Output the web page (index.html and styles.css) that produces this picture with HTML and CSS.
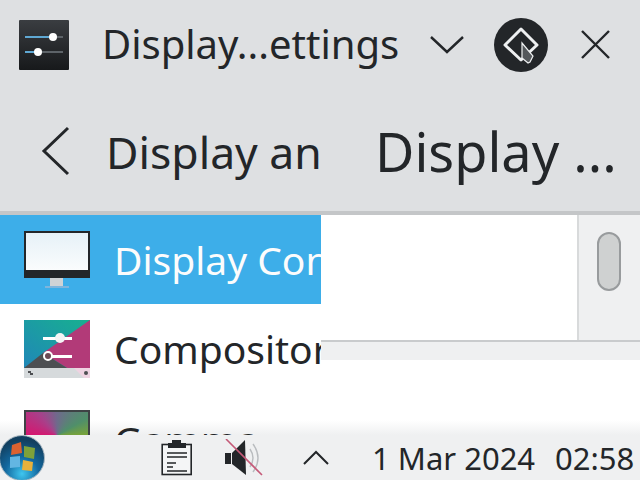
FILE: index.html
```html
<!DOCTYPE html>
<html lang="en">
<head>
	<meta charset="UTF-8">
	<title>Display Settings</title>
	<link rel="stylesheet" href="styles.css">
</head>
<body>
<div class="screen">
	<div class="titlebar">
		<svg class="app-icon" width="52" height="52" viewBox="0 0 52 52">
			<defs>
				<linearGradient id="appbg" x1="0" y1="0" x2="0" y2="1">
					<stop offset="0" stop-color="#3a3d41"/>
					<stop offset="1" stop-color="#17191b"/>
				</linearGradient>
			</defs>
			<rect x="1" y="1" width="50" height="50" rx="1" fill="url(#appbg)"/>
			<rect x="7" y="17" width="38" height="2" fill="#5d6368"/>
			<rect x="7" y="17" width="29" height="2" fill="#5fa8d3"/>
			<rect x="7" y="32" width="38" height="2" fill="#5d6368"/>
			<rect x="7" y="32" width="14" height="2" fill="#5fa8d3"/>
			<circle cx="35" cy="18" r="4" fill="#fff"/>
			<circle cx="20" cy="33" r="4" fill="#fff"/>
		</svg>
		<div class="title">Display...ettings</div>
		<svg class="chevron" width="36" height="24" viewBox="0 0 36 24">
			<path d="M2 4 L18 19 L34 4" fill="none" stroke="#232629" stroke-width="2.4"/>
		</svg>
		<svg class="pin-btn" width="56" height="56" viewBox="0 0 56 56">
			<circle cx="28" cy="28" r="27" fill="#232629"/>
			<path d="M28 12 L44 28 L28 43 L12 28 Z" fill="none" stroke="#eef0f1" stroke-width="3" stroke-linejoin="round"/>
			<path d="M29 26 L40 39 L37 45 L35 46 L29 41 Z" fill="#54585b" stroke="#eef0f1" stroke-width="1.2"/>
		</svg>
		<svg class="close" width="30" height="30" viewBox="0 0 30 30">
			<path d="M2 1 L29 28 M29 1 L2 28" fill="none" stroke="#232629" stroke-width="2.4"/>
		</svg>
	</div>
	<div class="toolbar">
		<svg class="back" width="30" height="50" viewBox="0 0 30 50">
			<path d="M27 2 L3 25 L27 48" fill="none" stroke="#232629" stroke-width="3"/>
		</svg>
		<div class="crumb">Display an</div>
		<div class="heading">Display ...</div>
	</div>
	<div class="main">
		<div class="list">
			<div class="row selected">
				<svg class="row-icon" width="66" height="58" viewBox="0 0 66 58">
					<defs>
						<linearGradient id="scr" x1="0" y1="0" x2="0" y2="1">
							<stop offset="0" stop-color="#e6f1f7"/>
							<stop offset="1" stop-color="#fafcfd"/>
						</linearGradient>
					</defs>
					<rect x="0" y="0" width="66" height="47" fill="#232629"/>
					<rect x="2" y="2" width="62" height="37" fill="url(#scr)"/>
					<rect x="26" y="47" width="13" height="8" fill="#cfd3d6"/>
					<rect x="21" y="55" width="24" height="2" fill="#7fb5dc"/>
				</svg>
				<span class="row-text">Display Configuration</span>
			</div>
			<div class="row">
				<svg class="row-icon" width="66" height="58" viewBox="0 0 66 58">
					<defs>
						<linearGradient id="teal" x1="0" y1="1" x2="1" y2="0">
							<stop offset="0" stop-color="#2087b8"/>
							<stop offset="1" stop-color="#17b08f"/>
						</linearGradient>
					</defs>
					<rect x="0" y="0" width="66" height="48" fill="url(#teal)"/>
					<path d="M66 0 L66 48 L43 48 L19 33 Z" fill="#b23a78"/>
					<path d="M0 48 L19 33 L43 48 Z" fill="#4d4f52"/>
					<rect x="0" y="48" width="66" height="10" fill="#d6dadc"/>
					<path d="M50 48 L66 48 L66 58 L60 58 Z" fill="#efd3e2"/>
					<rect x="19" y="17" width="29" height="3" fill="#fff"/>
					<circle cx="36" cy="18" r="5" fill="#f4f5f6"/>
					<rect x="24" y="35" width="24" height="3" fill="#fff"/>
					<circle cx="24" cy="36" r="4" fill="#6b4a55" stroke="#fff" stroke-width="2"/>
					<circle cx="62" cy="53" r="2" fill="#4d4f52"/>
					<rect x="4" y="51" width="3" height="2" fill="#4d4f52"/>
					<rect x="6" y="53" width="3" height="2" fill="#4d4f52"/>
				</svg>
				<span class="row-text">Compositor</span>
			</div>
			<div class="row row-gamma">
				<div class="gamma-icon"></div>
				<span class="row-text">Gamma</span>
			</div>
		</div>
		<div class="side">
			<div class="side-top">
				<div class="side-blank"></div>
				<div class="scrollbar"><div class="thumb"></div></div>
			</div>
			<div class="hscroll"></div>
		</div>
	</div>
	<div class="panel">
		<svg class="orb" width="50" height="50" viewBox="0 0 50 50">
			<defs>
				<radialGradient id="orbbg" cx="0.5" cy="0.85" r="0.75">
					<stop offset="0" stop-color="#3fc6ef"/>
					<stop offset="0.5" stop-color="#12689f"/>
					<stop offset="1" stop-color="#123f5f"/>
				</radialGradient>
			</defs>
			<circle cx="22" cy="25" r="22.5" fill="url(#orbbg)" stroke="#a9b8c2" stroke-width="1"/>
			<path d="M12 12 L21 9 L22 20 L11 22 Z" fill="#dc6230"/>
			<path d="M24 13 L35 15 L34 26 L24 24 Z" fill="#7ea13a"/>
			<path d="M10 24 L20 23 L20 34 L10 35 Z" fill="#63b6e2"/>
			<path d="M23 27 L33 29 L32 38 L22 37 Z" fill="#e8b13a"/>
		</svg>
		<svg class="clip" width="32" height="36" viewBox="0 0 32 36">
			<rect x="1.2" y="4.5" width="29" height="30" fill="#f4f5f6" stroke="#232629" stroke-width="1.6"/>
			<path d="M11 0 H20 V3 H25 V8 H7 V3 H11 Z" fill="#232629"/>
			<path d="M6 13 H26 M6 17 H26 M6 23 H15 M6 27 H12 M6 31 H26" stroke="#232629" stroke-width="1.6"/>
		</svg>
		<svg class="speaker" width="38" height="38" viewBox="0 0 38 38">
			<rect x="0" y="14" width="6" height="11" fill="#232629"/>
			<path d="M7 14 L20 1 L21 36 L7 25 Z" fill="#232629"/>
			<path d="M25 10 Q31 19 25 28 M28 5 Q38 19 28 33" fill="none" stroke="#b9bcbf" stroke-width="1.4"/>
			<path d="M1 0 L37 36" stroke="#c55a78" stroke-width="1.6"/>
		</svg>
		<svg class="tray-up" width="28" height="16" viewBox="0 0 28 16">
			<path d="M2 14 L14 2 L26 14" fill="none" stroke="#232629" stroke-width="2"/>
		</svg>
		<span class="clock-date">1 Mar 2024</span>
		<span class="clock-time">02:58</span>
	</div>
</div>
</body>
</html>
```

FILE: styles.css
```css
body {
	margin: 0;
	font-family: "Noto Sans", sans-serif;
	color: #232629;
}
.screen {
	width: 640px;
	height: 480px;
	display: flex;
	flex-direction: column;
	overflow: hidden;
	background: #fff;
}

/* window title */
.titlebar {
	height: 90px;
	display: flex;
	align-items: center;
	background: #dee0e2;
}
.app-icon {
	margin-left: 18px;
	flex: none;
}
.title {
	margin-left: 32px;
	width: 327px;
	padding-bottom: 3px;
	font-size: 40px;
	white-space: nowrap;
}
.pin-btn {
	margin-left: 28px;
}
.close {
	margin-left: 31px;
}

/* page header */
.toolbar {
	height: 121px;
	display: flex;
	align-items: center;
	background: #dee0e2;
	border-bottom: 4px solid #c4c6c8;
}
.back {
	margin-left: 41px;
	flex: none;
}
.crumb {
	margin-left: 35px;
	width: 269px;
	padding-top: 2px;
	font-size: 44.5px;
	white-space: nowrap;
	overflow: hidden;
}
.heading {
	font-size: 54px;
	white-space: nowrap;
}

/* content */
.main {
	flex: 1;
	display: flex;
	overflow: hidden;
	background: linear-gradient(#fff 205px, #eff0f1 220px);
}
.list {
	width: 321px;
	flex: none;
	overflow: hidden;
}
.row {
	height: 89px;
	display: flex;
	align-items: center;
	font-size: 39px;
	white-space: nowrap;
}
.row.selected {
	background: #3daee9;
	color: #fcfcfc;
}
.row.row-gamma {
	height: 93px;
}
.row-icon {
	margin-left: 24px;
	flex: none;
}
.gamma-icon {
	margin-left: 24px;
	margin-top: 1px;
	flex: none;
	width: 66px;
	height: 60px;
	box-sizing: border-box;
	border: 2px solid #3e4245;
	background: conic-gradient(at 50% 42%, #6f6a8c, #4f8f6a 60deg, #8fae1e 105deg, #e0b010 150deg, #f07a10 180deg, #e8243c 215deg, #d6166f 270deg, #a8408a 320deg, #6f6a8c);
}
.row-text {
	margin-left: 24px;
}
.side {
	flex: 1;
}
.side-top {
	height: 125px;
	display: flex;
	border-bottom: 2px solid #c9cbcd;
}
.side-blank {
	flex: 1;
}
.scrollbar {
	width: 63px;
	background: #eff0f1;
	border-left: 2px solid #d8dadb;
	padding-top: 17px;
	padding-left: 18px;
	box-sizing: border-box;
}
.thumb {
	width: 24px;
	height: 59px;
	box-sizing: border-box;
	background: #cfd1d1;
	border: 2px solid #989b9d;
	border-radius: 12px;
}
.hscroll {
	height: 18px;
	background: #eff0f1;
}

/* bottom panel */
.panel {
	height: 45px;
	flex: none;
	display: flex;
	align-items: center;
	background: #eff0f1;
	position: relative;
}
.orb {
	position: absolute;
	left: 0;
	top: -2px;
}
.clip {
	margin-left: 161px;
}
.speaker {
	margin-left: 32px;
}
.tray-up {
	margin-left: 39px;
}
.clock-date {
	margin-left: 42px;
	font-size: 31px;
	white-space: nowrap;
}
.clock-time {
	margin-left: 20px;
	font-size: 31px;
	white-space: nowrap;
}
```
